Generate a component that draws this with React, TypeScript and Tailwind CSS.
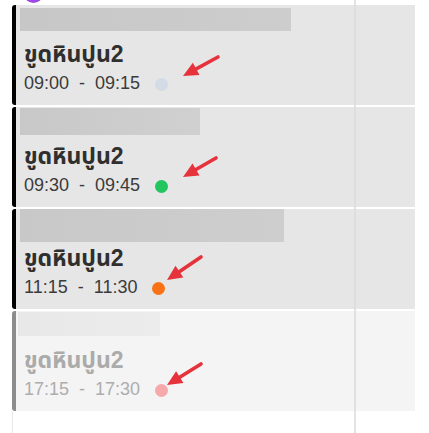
import React from "react";

type Slot = {
  time: string;
  dot: string;
  bar: { top: number; h: number; w: number; left: number; color: string };
  faded?: boolean;
};

const slots: Slot[] = [
  {
    time: "09:00 - 09:15",
    dot: "bg-[#d3dce6]",
    bar: { top: 3, h: 23, w: 271, left: 4, color: "bg-gradient-to-r from-[#c7c7c7] to-[#cdcdcd]" },
  },
  {
    time: "09:30 - 09:45",
    dot: "bg-[#22c55e]",
    bar: { top: 1, h: 27, w: 180, left: 4, color: "bg-gradient-to-r from-[#c8c8c8] to-[#d0d0d0]" },
  },
  {
    time: "11:15 - 11:30",
    dot: "bg-[#f97316]",
    bar: { top: 0, h: 33, w: 264, left: 4, color: "bg-gradient-to-r from-[#c8c8c8] to-[#cecece]" },
  },
  {
    time: "17:15 - 17:30",
    dot: "bg-[#f5a9ab]",
    bar: { top: 1, h: 24, w: 142, left: 2, color: "bg-gradient-to-r from-[#e8e8e8] to-[#ececec]" },
    faded: true,
  },
];

// tail -> tip arrows drawn over the cards
const arrows = [
  { x1: 218, y1: 57, x2: 183, y2: 76 },
  { x1: 216, y1: 158, x2: 183, y2: 177 },
  { x1: 201, y1: 257, x2: 167, y2: 280 },
  { x1: 201, y1: 364, x2: 167, y2: 385 },
];

const Arrow = ({ x1, y1, x2, y2 }: { x1: number; y1: number; x2: number; y2: number }) => {
  const dx = x2 - x1;
  const dy = y2 - y1;
  const len = Math.sqrt(dx * dx + dy * dy);
  const ux = dx / len;
  const uy = dy / len;
  const headLen = 15;
  const headW = 7;
  const bx = x2 - ux * headLen;
  const by = y2 - uy * headLen;
  const px = -uy;
  const py = ux;
  const head = `${x2},${y2} ${bx + px * headW},${by + py * headW} ${bx - px * headW},${by - py * headW}`;
  return (
    <g>
      <line x1={x1} y1={y1} x2={bx + ux * 2} y2={by + uy * 2} stroke="#e5323b" strokeWidth={3.6} strokeLinecap="round" />
      <polygon points={head} fill="#e5323b" />
    </g>
  );
};

const SlotCard = ({ slot }: { slot: Slot }) => {
  const b = slot.bar;
  return (
    <div
      className={`h-[100px] w-[403px] ml-[12px] rounded-l-[3px] border-l-[4px] flex flex-col ${
        slot.faded ? "bg-[#f4f4f4] border-[#8c8c8c]" : "bg-[#e6e6e6] border-black"
      }`}
    >
      <div className="h-[30px] shrink-0">
        <div
          className={`${b.color}`}
          style={{ marginTop: b.top, marginLeft: b.left, height: b.h, width: b.w }}
        />
      </div>
      <div
        className={`ml-[8px] mt-[6px] text-[23px] leading-[26px] font-bold ${
          slot.faded ? "text-[#ababab]" : "text-[#2f2f2f]"
        }`}
      >
        ขูดหินปูน2
      </div>
      <div className="ml-[8px] mt-[6px] flex items-center">
        <span
          className={`text-[18px] leading-[21px] [word-spacing:5px] ${
            slot.faded ? "text-[#adadad]" : "text-[#3b3b3b]"
          }`}
        >
          {slot.time}
        </span>
        <span className={`ml-[15px] mt-[1px] w-[13px] h-[13px] rounded-full ${slot.dot}`} />
      </div>
    </div>
  );
};

export default function App() {
  return (
    <div
      className="relative w-[429px] h-[433px] bg-white overflow-hidden pt-[5px]"
      style={{ fontFamily: '"Liberation Sans", "Noto Sans Thai", "Noto Sans", sans-serif' }}
    >
      <div className="absolute left-[24px] top-[-16px] w-[19px] h-[19px] rounded-full bg-[#a046e6]" />
      <div className="flex flex-col gap-[2px]">
        {slots.map((s, i) => (
          <SlotCard key={i} slot={s} />
        ))}
      </div>
      <div className="ml-[12px] w-px h-[30px] bg-[#e8e8e8]" />
      <div className="absolute top-0 bottom-0 left-[354px] w-[2px] bg-[#dcdcdc]/80" />
      <svg className="absolute inset-0" width={429} height={433} viewBox="0 0 429 433">
        {arrows.map((a, i) => (
          <Arrow key={i} {...a} />
        ))}
      </svg>
    </div>
  );
}
